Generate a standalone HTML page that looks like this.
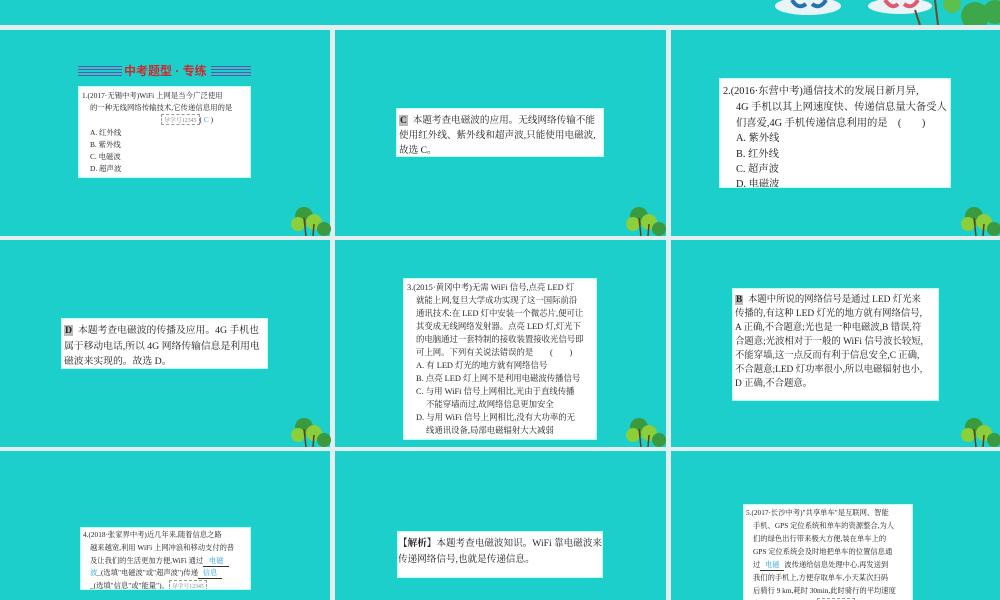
<!DOCTYPE html>
<html><head><meta charset="utf-8"><style>
*{margin:0;padding:0;box-sizing:border-box}
body{width:1000px;height:600px;position:relative;background:#e3eeee;overflow:hidden;font-family:"Liberation Serif","Noto Serif CJK SC",serif;color:#222}
.p{position:absolute;background:#1ccfca;overflow:hidden}
.b{position:absolute;background:#fff;border:1px solid #bfe;overflow:hidden}
.l{position:absolute;white-space:nowrap}
.k{background:#bbb;padding:0 1px;font-weight:bold}
.bl{color:#2aa0d8}
.u{display:inline-block;border-bottom:1px solid #333;text-align:center}
.tag{display:inline-block;border:1px dashed #999;color:#888;font-size:0.8em;padding:0 2px}
</style></head><body>
<div class="p" style="left:0;top:0;width:1000px;height:25px"></div>
<svg style="position:absolute;left:770px;top:0" width="230" height="25"><ellipse cx="38" cy="6" rx="33" ry="9" fill="#e8f4f8"/><path d="M22 0 Q28 10 36 4 M42 4 Q50 10 56 0" stroke="#2a6fb0" stroke-width="4" fill="none"/><ellipse cx="130" cy="6" rx="32" ry="8" fill="#e8f4f8"/><path d="M115 0 Q122 10 128 4 M134 4 Q142 10 148 0" stroke="#e05a70" stroke-width="4" fill="none"/><line x1="145" y1="10" x2="150" y2="25" stroke="#6b4a2a" stroke-width="2"/><line x1="165" y1="0" x2="168" y2="25" stroke="#6b4a2a" stroke-width="2"/><circle cx="205" cy="16" r="14" fill="#3da84a"/><circle cx="225" cy="12" r="12" fill="#3da84a"/><circle cx="182" cy="4" r="9" fill="#5cc04e"/></svg>

<!-- row 1 -->
<div class="p" style="left:0;top:30px;width:330px;height:206px">
 <div style="position:absolute;left:78px;top:36px;width:44px;height:10px;background:repeating-linear-gradient(#6a4ea8 0 1px,transparent 1px 3px)"></div>
 <div class="l" style="left:124px;top:32px;font-size:12px;font-weight:bold;color:#d0282c;font-family:'Liberation Sans','Noto Sans CJK SC',sans-serif">中考题型 · 专练</div>
 <div style="position:absolute;left:211px;top:36px;width:40px;height:10px;background:repeating-linear-gradient(#6a4ea8 0 1px,transparent 1px 3px)"></div>
 <div class="b" style="left:78px;top:56px;width:173px;height:92px;font-size:7.4px">
  <div class="l" style="left:3px;top:3px">1.(2017·无锡中考)WiFi 上网是当今广泛使用</div>
  <div class="l" style="left:11px;top:15px">的一种无线网络传输技术,它传递信息用的是</div>
  <div class="l" style="left:82px;top:27px"><span class="tag">导学号12345</span>( <span class="bl">C</span> )</div>
  <div class="l" style="left:11px;top:40px">A. 红外线</div>
  <div class="l" style="left:11px;top:52px">B. 紫外线</div>
  <div class="l" style="left:11px;top:64px">C. 电磁波</div>
  <div class="l" style="left:11px;top:76px">D. 超声波</div>
 </div>
</div>
<div class="p" style="left:335px;top:30px;width:331px;height:206px">
 <div class="b" style="left:61px;top:78px;width:208px;height:49px;font-size:9.6px">
  <div class="l" style="left:2px;top:3px"><span class="k">C</span>&nbsp;&nbsp;本题考查电磁波的应用。无线网络传输不能</div>
  <div class="l" style="left:2px;top:18px">使用红外线、紫外线和超声波,只能使用电磁波,</div>
  <div class="l" style="left:2px;top:33px">故选 C。</div>
 </div>
</div>
<div class="p" style="left:671px;top:30px;width:329px;height:206px">
 <div class="b" style="left:48px;top:48px;width:232px;height:110px;font-size:10.3px">
  <div class="l" style="left:3px;top:3px">2.(2016·东营中考)通信技术的发展日新月异,</div>
  <div class="l" style="left:16px;top:19px">4G 手机以其上网速度快、传递信息量大备受人</div>
  <div class="l" style="left:16px;top:35px">们喜爱,4G 手机传递信息利用的是　(　　)</div>
  <div class="l" style="left:16px;top:50px">A. 紫外线</div>
  <div class="l" style="left:16px;top:66px">B. 红外线</div>
  <div class="l" style="left:16px;top:81px">C. 超声波</div>
  <div class="l" style="left:16px;top:96px">D. 电磁波</div>
 </div>
</div>

<!-- row 2 -->
<div class="p" style="left:0;top:240px;width:330px;height:207px">
 <div class="b" style="left:61px;top:78px;width:207px;height:51px;font-size:9.8px">
  <div class="l" style="left:2px;top:3px"><span class="k">D</span>&nbsp;&nbsp;本题考查电磁波的传播及应用。4G 手机也</div>
  <div class="l" style="left:2px;top:19px">属于移动电话,所以 4G 网络传输信息是利用电</div>
  <div class="l" style="left:2px;top:34px">磁波来实现的。故选 D。</div>
 </div>
</div>
<div class="p" style="left:335px;top:240px;width:331px;height:207px">
 <div class="b" style="left:68px;top:38px;width:194px;height:162px;font-size:8.4px">
  <div class="l" style="left:3px;top:2px">3.(2015·黄冈中考)无需 WiFi 信号,点亮 LED 灯</div>
  <div class="l" style="left:12px;top:15px">就能上网,复旦大学成功实现了这一国际前沿</div>
  <div class="l" style="left:12px;top:28px">通讯技术:在 LED 灯中安装一个微芯片,便可让</div>
  <div class="l" style="left:12px;top:41px">其变成无线网络发射器。点亮 LED 灯,灯光下</div>
  <div class="l" style="left:12px;top:54px">的电脑通过一套特制的接收装置接收光信号即</div>
  <div class="l" style="left:12px;top:67px">可上网。下列有关说法错误的是　　(　　)</div>
  <div class="l" style="left:12px;top:80px">A. 有 LED 灯光的地方就有网络信号</div>
  <div class="l" style="left:12px;top:93px">B. 点亮 LED 灯上网不是利用电磁波传播信号</div>
  <div class="l" style="left:12px;top:106px">C. 与用 WiFi 信号上网相比,光由于直线传播</div>
  <div class="l" style="left:22px;top:119px">不能穿墙而过,故网络信息更加安全</div>
  <div class="l" style="left:12px;top:132px">D. 与用 WiFi 信号上网相比,没有大功率的无</div>
  <div class="l" style="left:22px;top:145px">线通讯设备,局部电磁辐射大大减弱</div>
 </div>
</div>
<div class="p" style="left:671px;top:240px;width:329px;height:207px">
 <div class="b" style="left:61px;top:48px;width:207px;height:113px;font-size:9.4px">
  <div class="l" style="left:2px;top:2px"><span class="k">B</span>&nbsp;&nbsp;本题中所说的网络信号是通过 LED 灯光来</div>
  <div class="l" style="left:2px;top:16px">传播的,有这种 LED 灯光的地方就有网络信号,</div>
  <div class="l" style="left:2px;top:30px">A 正确,不合题意;光也是一种电磁波,B 错误,符</div>
  <div class="l" style="left:2px;top:44px">合题意;光波相对于一般的 WiFi 信号波长较短,</div>
  <div class="l" style="left:2px;top:58px">不能穿墙,这一点反而有利于信息安全,C 正确,</div>
  <div class="l" style="left:2px;top:72px">不合题意;LED 灯功率很小,所以电磁辐射也小,</div>
  <div class="l" style="left:2px;top:86px">D 正确,不合题意。</div>
 </div>
</div>

<!-- row 3 -->
<div class="p" style="left:0;top:451px;width:330px;height:149px">
 <div class="b" style="left:80px;top:76px;width:171px;height:63px;font-size:7.3px">
  <div class="l" style="left:2px;top:2px">4.(2018·张家界中考)近几年来,随着信息之路</div>
  <div class="l" style="left:9px;top:15px">越来越宽,利用 WiFi 上网冲浪和移动支付的普</div>
  <div class="l" style="left:9px;top:28px">及让我们的生活更加方便,WiFi 通过<span class="u bl" style="width:26px">电磁</span></div>
  <div class="l" style="left:9px;top:40px"><span class="bl">波</span>_(选填"电磁波"或"超声波")传递<span class="u bl" style="width:24px">信息</span></div>
  <div class="l" style="left:9px;top:52px">_(选填"信息"或"能量")。<span class="tag">导学号12345</span></div>
 </div>
</div>
<div class="p" style="left:335px;top:451px;width:331px;height:149px">
 <div class="b" style="left:62px;top:80px;width:206px;height:47px;font-size:9.6px">
  <div class="l" style="left:0;top:3px"><b>【解析】</b>本题考查电磁波知识。WiFi 靠电磁波来</div>
  <div class="l" style="left:0;top:19px">传递网络信号,也就是传递信息。</div>
 </div>
</div>
<div class="p" style="left:671px;top:451px;width:329px;height:149px">
 <div class="b" style="left:72px;top:53px;width:170px;height:100px;font-size:7.3px">
  <div class="l" style="left:2px;top:3px">5.(2017·长沙中考)"共享单车"是互联网、智能</div>
  <div class="l" style="left:9px;top:16px">手机、GPS 定位系统和单车的资源整合,为人</div>
  <div class="l" style="left:9px;top:29px">们的绿色出行带来极大方便,装在单车上的</div>
  <div class="l" style="left:9px;top:42px">GPS 定位系统会及时地把单车的位置信息通</div>
  <div class="l" style="left:9px;top:55px">过<span class="u bl" style="width:24px">电磁</span>波传递给信息处理中心,再发送到</div>
  <div class="l" style="left:9px;top:68px">我们的手机上,方便存取单车,小天某次扫码</div>
  <div class="l" style="left:9px;top:81px">后骑行 9 km,耗时 30min,此时骑行的平均速度</div>
  <div class="l" style="left:9px;top:93px">为<span class="u bl" style="width:22px">18</span> km/h。　　<span class="tag">导学号12345</span></div>
 </div>
</div>

<!-- trees -->
<svg style="position:absolute;left:0;top:0" width="1000" height="600">
<defs><g id="t"><circle cx="12" cy="10" r="9" fill="#3a9a40"/><circle cx="6" cy="18" r="7" fill="#8bcf3a"/><circle cx="22" cy="16" r="8" fill="#8bcf3a"/><circle cx="32" cy="23" r="7" fill="#3a9a40"/><line x1="12" y1="12" x2="14" y2="30" stroke="#5b4022" stroke-width="1.5"/><line x1="22" y1="18" x2="21" y2="30" stroke="#5b4022" stroke-width="1.5"/></g></defs>
<use href="#t" x="292" y="206"/><use href="#t" x="627" y="206"/><use href="#t" x="962" y="206"/>
<use href="#t" x="292" y="417"/><use href="#t" x="627" y="417"/><use href="#t" x="962" y="417"/>
</svg>
</body></html>
